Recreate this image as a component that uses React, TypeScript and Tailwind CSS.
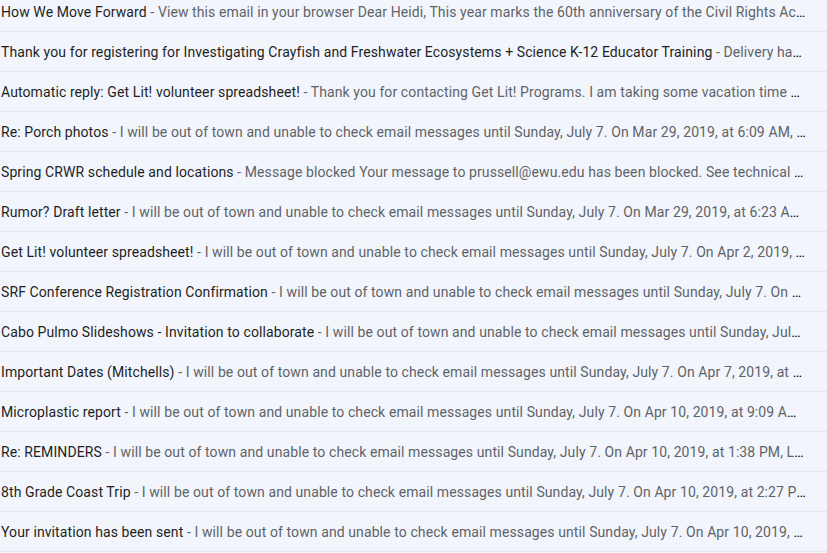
const emails = [
  {
    subject: "How We Move Forward",
    snippet:
      "View this email in your browser Dear Heidi, This year marks the 60th anniversary of the Civil Rights Act of 1964 and we continue to work",
  },
  {
    subject:
      "Thank you for registering for Investigating Crayfish and Freshwater Ecosystems + Science K-12 Educator Training",
    snippet: "Delivery has failed to these recipients or groups",
  },
  {
    subject: "Automatic reply: Get Lit! volunteer spreadsheet!",
    snippet:
      "Thank you for contacting Get Lit! Programs. I am taking some vacation time and will return on Monday",
  },
  {
    subject: "Re: Porch photos",
    snippet:
      "I will be out of town and unable to check email messages until Sunday, July 7. On Mar 29, 2019, at 6:09 AM, Heidi wrote",
  },
  {
    subject: "Spring CRWR schedule and locations",
    snippet:
      "Message blocked Your message to prussell@ewu.edu has been blocked. See technical details below for more information",
  },
  {
    subject: "Rumor? Draft letter",
    snippet:
      "I will be out of town and unable to check email messages until Sunday, July 7. On Mar 29, 2019, at 6:23 AM, Heidi wrote",
  },
  {
    subject: "Get Lit! volunteer spreadsheet!",
    snippet:
      "I will be out of town and unable to check email messages until Sunday, July 7. On Apr 2, 2019, at 10:12 AM, Heidi wrote",
  },
  {
    subject: "SRF Conference Registration Confirmation",
    snippet:
      "I will be out of town and unable to check email messages until Sunday, July 7. On Apr 2, 2019, at 3:41 PM, Heidi wrote",
  },
  {
    subject: "Cabo Pulmo Slideshows - Invitation to collaborate",
    snippet:
      "I will be out of town and unable to check email messages until Sunday, July 7. On Apr 3, 2019, at 8:15 AM, Heidi wrote",
  },
  {
    subject: "Important Dates (Mitchells)",
    snippet:
      "I will be out of town and unable to check email messages until Sunday, July 7. On Apr 7, 2019, at 9:02 PM, Heidi wrote",
  },
  {
    subject: "Microplastic report",
    snippet:
      "I will be out of town and unable to check email messages until Sunday, July 7. On Apr 10, 2019, at 9:09 AM, Heidi wrote",
  },
  {
    subject: "Re: REMINDERS",
    snippet:
      "I will be out of town and unable to check email messages until Sunday, July 7. On Apr 10, 2019, at 1:38 PM, Lisa wrote",
  },
  {
    subject: "8th Grade Coast Trip",
    snippet:
      "I will be out of town and unable to check email messages until Sunday, July 7. On Apr 10, 2019, at 2:27 PM, Heidi wrote",
  },
  {
    subject: "Your invitation has been sent",
    snippet:
      "I will be out of town and unable to check email messages until Sunday, July 7. On Apr 10, 2019, at 3:02 PM, Heidi wrote",
  },
];

export default function App() {
  return (
    <div className="w-[827px] h-[553px] overflow-hidden bg-[#f2f6fc] font-['Roboto',sans-serif]">
      <div className="-mt-2">
        {emails.map((email) => (
          <div
            key={email.subject}
            className="h-10 flex items-center border-b border-[#e3e7ee]"
          >
            <div className="w-[806px] pl-px truncate text-[14px] leading-5 tracking-[0.1px]">
              <span className="text-[#1f1f1f]">{email.subject}</span>
              <span className="text-[#5f6368]"> - {email.snippet}</span>
            </div>
          </div>
        ))}
      </div>
    </div>
  );
}
